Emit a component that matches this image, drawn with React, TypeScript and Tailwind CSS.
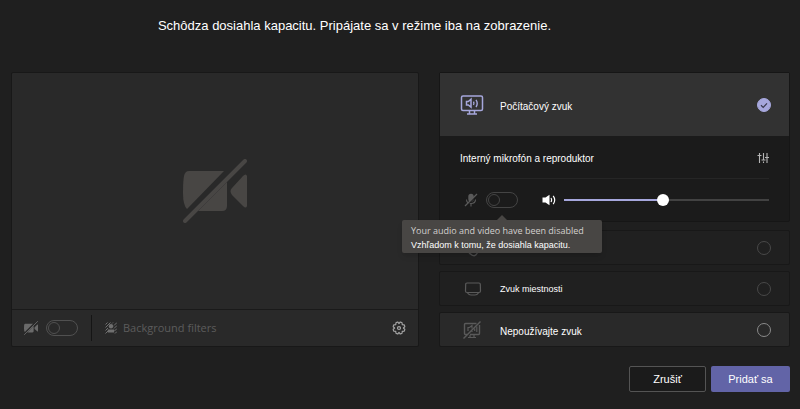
import { useState } from "react";
import type { ReactNode } from "react";

type IconProps = { className?: string };

function CameraOffIcon({ className }: IconProps) {
  return (
    <svg className={className} viewBox="0 0 64 64" fill="currentColor" aria-hidden="true">
      <path d="M6 12h35L4 50Q0 46 0 34Q0 22 1 17Q2 12 6 12z" />
      <path d="M44 23v24q0 5-5 5H15z" />
      <path d="M64 17v30q-1 3-4 0L49 36q-3-4 0-7l11-12q3-3 4 0z" />
      <path d="M2 62L62 2" stroke="currentColor" strokeWidth="4" strokeLinecap="round" />
    </svg>
  );
}

function ComputerAudioIcon({ className }: IconProps) {
  return (
    <svg className={className} viewBox="0 0 24 20" fill="none" stroke="currentColor" aria-hidden="true">
      <rect x="1.500" y="1" width="21" height="14.500" rx="1.500" strokeWidth="1.500" />
      <path d="M9.500 16v3M14.500 16v3M7 19h10" strokeWidth="1.500" />
      <path d="M6.500 6.500h1.800L11 4.200v8L8.300 10H6.500z" strokeWidth="1.500" />
      <path d="M13.500 6.600q1 1.700 0 3.400M16 4.800q2.400 3.600 0 7.200" strokeWidth="1.400" />
    </svg>
  );
}

function NoAudioIcon({ className }: IconProps) {
  return (
    <svg className={className} viewBox="0 0 20 20" fill="none" stroke="currentColor" aria-hidden="true">
      <path d="M14.500 3.500h-11q-1 0-1 1v9q0 1 1 1H5M17.500 5v8.500q0 1-1 1H8" strokeWidth="1.400" />
      <path d="M8 15v2.500M12 15v2.500M6 17.500h8" strokeWidth="1.200" />
      <path d="M6 11V7.500h1.500l2.500-2v3M10 12v-1M12.700 8.500V11M14.800 6.500V12" strokeWidth="1.200" />
      <path d="M1.500 18.500L18.500 1.500" strokeWidth="1.400" />
    </svg>
  );
}

function RoomIcon({ className }: IconProps) {
  return (
    <svg className={className} viewBox="0 0 18 16" fill="none" stroke="currentColor" aria-hidden="true">
      <path d="M3 2h12q1.300 0 1.300 1.300l.2 6.700q0 1.500-1.500 1.500H3q-1.500 0-1.500-1.500l.2-6.700Q1.700 2 3 2z" strokeWidth="1.200" />
      <path d="M3.500 12q1.500 2 3.500 2h4q2 0 3.500-2" strokeWidth="1.200" />
    </svg>
  );
}

function PhoneIcon({ className }: IconProps) {
  return (
    <svg className={className} viewBox="0 0 16 16" fill="none" stroke="currentColor" aria-hidden="true">
      <path d="M3 1.500l2-.5 1.500 3.500L5 6q.5 2.500 2.500 4.500l2-.7 2.200 2.700-1.200 1.800q-1 1-3 .2Q2 11.500 1.500 5q0-2.500 1.500-3.500z" strokeWidth="1.200" />
    </svg>
  );
}

function MicOffIcon({ className }: IconProps) {
  return (
    <svg className={className} viewBox="0 0 14 14" fill="none" stroke="currentColor" aria-hidden="true">
      <rect x="4.300" y=".8" width="5.400" height="8" rx="2.700" fill="currentColor" stroke="none" />
      <path d="M2.500 6.500q0 4 4.500 4t4.500-4M7 10.500v3" strokeWidth="1.100" />
      <path d="M1.500 14L14 1.500" stroke="#1b1b1b" strokeWidth="1.200" />
      <path d="M1 13L13 1" strokeWidth="1.200" />
    </svg>
  );
}

function SpeakerIcon({ className }: IconProps) {
  return (
    <svg className={className} viewBox="0 0 14 12" fill="none" stroke="currentColor" aria-hidden="true">
      <path d="M.5 3.500h3L7.500.8v10.400L3.500 8.500h-3z" fill="currentColor" stroke="none" />
      <path d="M9 4q1.200 2 0 4M11.200 1.800q3 4.200 0 8.400" strokeWidth="1.200" />
    </svg>
  );
}

function MixerIcon({ className }: IconProps) {
  return (
    <svg className={className} viewBox="0 0 12 12" stroke="currentColor" aria-hidden="true">
      <path d="M2.500 1v10M6.500 1v7M6.500 9.500v1.500M10 1v10" strokeWidth="1.100" />
      <path d="M.5 3.500h4M4.500 8h4M8 5.500h4" strokeWidth="1.200" />
    </svg>
  );
}

function FiltersIcon({ className }: IconProps) {
  return (
    <svg className={className} viewBox="0 0 12 12" aria-hidden="true">
      <path
        d="M.5 2.500l2-2M.5 5.500l5-5M.5 8.500L3 6M.5 11.500L3 9M7 1.500l1-1M9 3.500l3-3M9 6.500l3-3M9.500 9l2.500-2.500M10 11.500l2-2"
        stroke="currentColor"
        fill="none"
      />
      <circle cx="6" cy="4.200" r="2.200" fill="currentColor" />
      <path d="M2.800 7.500h6.400v3H2.800z" fill="currentColor" />
    </svg>
  );
}

function GearIcon({ className }: IconProps) {
  return (
    <svg className={className} viewBox="0 0 16 16" fill="none" stroke="currentColor" aria-hidden="true">
      <path
        d="M6.200 1.300h.6L8 2.900l1.200-1.600h.6l1.700.7.200 2.100 2.200.3.700 1.600v.6L13 8l1.600 1.400v.6l-.7 1.600-2.200.3-.2 2.100-1.700.7h-.6L8 13.100l-1.200 1.600h-.6L4.500 14l-.2-2.100-2.200-.3L1.400 10v-.6L3 8 1.400 6.600V6l.7-1.600 2.200-.3L4.500 2z"
        strokeWidth="1.300"
        strokeLinejoin="round"
      />
      <circle cx="8" cy="8" r="1.700" strokeWidth="1.400" />
    </svg>
  );
}

type ToggleProps = { label: string; className: string };

function Toggle({ label, className }: ToggleProps) {
  return (
    <input
      type="checkbox"
      role="switch"
      aria-label={label}
      disabled
      className={`flex h-4 w-8 shrink-0 appearance-none items-center rounded-full border px-px before:size-3 before:rounded-full before:border before:border-inherit ${className}`}
    />
  );
}

type AudioOptionProps = {
  value: string;
  icon: ReactNode;
  label?: string;
  ariaLabel?: string;
  rowClass: string;
  textClass?: string;
  radioClass: string;
  selected: string;
  onSelect: (value: string) => void;
};

function AudioOption({
  value,
  icon,
  label,
  ariaLabel,
  rowClass,
  textClass,
  radioClass,
  selected,
  onSelect,
}: AudioOptionProps) {
  return (
    <label className={`flex items-center pr-[18px] pl-5 ${rowClass}`}>
      <span className="flex w-10 shrink-0">{icon}</span>
      <span className={`flex-1 pt-[3px] text-white ${textClass}`}>{label}</span>
      <span className="grid shrink-0">
        <input
          type="radio"
          name="audio"
          value={value}
          aria-label={ariaLabel}
          checked={selected === value}
          onChange={() => onSelect(value)}
          className={`peer col-start-1 row-start-1 size-[14px] appearance-none rounded-full border checked:border-[#a6a7dc] checked:bg-[#a6a7dc] ${radioClass}`}
        />
        <svg
          className="pointer-events-none invisible col-start-1 row-start-1 size-[14px] text-[#38384c] peer-checked:visible"
          viewBox="0 0 14 14"
          fill="none"
          stroke="currentColor"
          aria-hidden="true"
        >
          <path d="M4 7.300l2.200 2.100L10 5.300" strokeWidth="1.200" />
        </svg>
      </span>
    </label>
  );
}

function VideoPreview() {
  return (
    <section className="flex flex-col rounded-xs border border-[#181818] bg-[#292929]">
      <div className="flex flex-1 items-center justify-center">
        <CameraOffIcon className="size-16 text-[#484644]" />
      </div>
      <div className="flex h-[37px] items-center border-t border-[#1a1a1a] px-3">
        <CameraOffIcon className="size-[14px] text-[#6a6a6a]" />
        <Toggle label="Kamera" className="ml-2 border-[#505050]" />
        <span className="mx-[13px] h-[26px] w-px bg-[#151515]" />
        <button disabled className="flex items-center gap-[6px] text-[#5c5c5c]">
          <FiltersIcon className="size-3 text-[#707070]" />
          <span className="font-['Open_Sans',sans-serif] text-[11px]">Background filters</span>
        </button>
        <button aria-label="Nastavenia" className="ml-auto text-[#a5a5a5]">
          <GearIcon className="size-[14px]" />
        </button>
      </div>
    </section>
  );
}

function DeviceControls() {
  const [volume, setVolume] = useState(48);

  return (
    <div className="px-5 pb-[13px]">
      <div className="flex h-[43px] items-center justify-between border-b border-[#262626] pt-0.5">
        <span className="text-[10px] text-white">Interný mikrofón a reproduktor</span>
        <button aria-label="Nastavenia zariadení" className="text-[#b5b5b5]">
          <MixerIcon className="size-3" />
        </button>
      </div>
      <div className="mt-[13px] flex items-center">
        <MicOffIcon className="ml-1 size-[14px] text-[#5a5a5a]" />
        <div className="relative ml-2 flex">
          <Toggle label="Mikrofón" className="border-[#444444]" />
          <div
            role="tooltip"
            className="absolute top-7 left-1/2 z-10 w-[200px] -translate-x-1/2 rounded-xs bg-[#484644] px-[9px] pt-[3px] text-[9px] leading-[15px] whitespace-nowrap shadow-md"
          >
            <span className="absolute -top-[5px] left-1/2 -translate-x-1/2 border-x-5 border-b-5 border-x-transparent border-b-[#484644]" />
            <p className="font-['Open_Sans',sans-serif] text-[#d2d0ce]">
              Your audio and video have been disabled
            </p>
            <p className="text-white">Vzhľadom k tomu, že dosiahla kapacitu.</p>
          </div>
        </div>
        <SpeakerIcon className="ml-6 h-3 w-[14px] text-white" />
        <input
          type="range"
          aria-label="Hlasitosť"
          value={volume}
          onChange={(e) => setVolume(Number(e.target.value))}
          style={{
            backgroundImage: `linear-gradient(to right, #a6a7dc ${volume}%, #424242 ${volume}%)`,
          }}
          className="ml-2 h-0.5 min-w-0 flex-1 appearance-none [&::-webkit-slider-thumb]:size-3 [&::-webkit-slider-thumb]:appearance-none [&::-webkit-slider-thumb]:rounded-full [&::-webkit-slider-thumb]:bg-white"
        />
      </div>
    </div>
  );
}

export default function App() {
  const [audio, setAudio] = useState("computer");

  return (
    <main className="flex min-h-screen flex-col bg-[#1f1f1f] pt-4 pr-[10px] pb-4 pl-[11px] font-['Liberation_Sans',Arial,sans-serif]">
      <h1 className="pr-[92px] text-center text-[13px] leading-5 text-white">
        Schôdza dosiahla kapacitu. Pripájate sa v režime iba na zobrazenie.
      </h1>
      <div className="mt-9 grid grid-cols-[408fr_351fr] gap-5">
        <VideoPreview />
        <div className="flex flex-col gap-[6px]">
          <div className="mb-[2px] rounded-xs border border-[#161616] bg-[#1b1b1b]">
            <AudioOption
              value="computer"
              icon={<ComputerAudioIcon className="h-5 w-6 text-[#a6a7dc]" />}
              label="Počítačový zvuk"
              rowClass="h-[63px] bg-[#323232]"
              textClass="text-[10px]"
              radioClass="border-[#8a8a8a]"
              selected={audio}
              onSelect={setAudio}
            />
            <DeviceControls />
          </div>
          <AudioOption
            value="phone"
            icon={<PhoneIcon className="ml-1 size-[18px] text-[#4a4a4a]" />}
            ariaLabel="Zvuk telefónu"
            rowClass="h-[35px] rounded-xs border border-[#181818] bg-[#202020]"
            radioClass="border-[#484848]"
            selected={audio}
            onSelect={setAudio}
          />
          <AudioOption
            value="room"
            icon={<RoomIcon className="ml-1 h-4 w-[18px] text-[#5a5a5a]" />}
            label="Zvuk miestnosti"
            rowClass="h-[35px] rounded-xs border border-[#181818] bg-[#202020]"
            textClass="text-[9px]"
            radioClass="border-[#484848]"
            selected={audio}
            onSelect={setAudio}
          />
          <AudioOption
            value="none"
            icon={<NoAudioIcon className="ml-[2px] size-5 text-[#5a5a5a]" />}
            label="Nepoužívajte zvuk"
            rowClass="h-[35px] rounded-xs border border-[#181818] bg-[#292929]"
            textClass="text-[10px]"
            radioClass="border-[#8a8a8a]"
            selected={audio}
            onSelect={setAudio}
          />
        </div>
      </div>
      <div className="mt-[19px] flex justify-end gap-[5px] text-[11px] text-white">
        <button className="h-[26px] w-[77px] rounded-xs border border-[#545454] bg-[#1b1b1b]">
          Zrušiť
        </button>
        <button className="h-[26px] w-[79px] rounded-xs bg-[#6264a7]">Pridať sa</button>
      </div>
    </main>
  );
}
